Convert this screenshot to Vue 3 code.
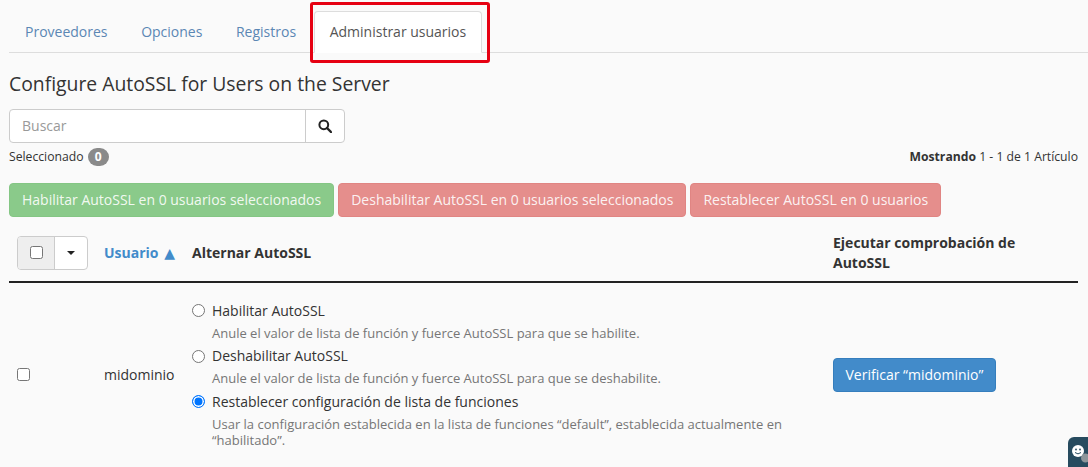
<script setup>
const tabs = ['Proveedores', 'Opciones', 'Registros']
const actions = [
  { label: 'Habilitar AutoSSL en 0 usuarios seleccionados', kind: 'success' },
  { label: 'Deshabilitar AutoSSL en 0 usuarios seleccionados', kind: 'danger' },
  { label: 'Restablecer AutoSSL en 0 usuarios', kind: 'danger' },
]
const options = [
  { label: 'Habilitar AutoSSL', help: 'Anule el valor de lista de función y fuerce AutoSSL para que se habilite.', checked: false },
  { label: 'Deshabilitar AutoSSL', help: 'Anule el valor de lista de función y fuerce AutoSSL para que se deshabilite.', checked: false },
  { label: 'Restablecer configuración de lista de funciones', help: 'Usar la configuración establecida en la lista de funciones “default”, establecida actualmente en “habilitado”.', checked: true },
]
</script>

<template>
  <div class="page">
    <nav class="tabs">
      <a v-for="t in tabs" :key="t" class="tab">{{ t }}</a>
      <a class="tab active">Administrar usuarios</a>
      <span class="redbox"></span>
    </nav>

    <h1 class="title">Configure AutoSSL for Users on the Server</h1>

    <div class="search">
      <div class="search-input">Buscar</div>
      <div class="search-btn">
        <svg width="14" height="14" viewBox="0 0 14 14" fill="none" stroke="#222" stroke-width="2">
          <circle cx="5.8" cy="5.8" r="4.4" />
          <path d="M9 9l4 4" stroke-linecap="round" stroke-width="2.4" />
        </svg>
      </div>
    </div>

    <div class="status">
      <div class="selected">Seleccionado <span class="badge">0</span></div>
      <div class="showing"><b>Mostrando</b> 1 - 1 de 1 Artículo</div>
    </div>

    <div class="actions">
      <button v-for="a in actions" :key="a.label" class="action" :class="a.kind">{{ a.label }}</button>
    </div>

    <div class="table-head">
      <div class="col-check">
        <div class="check-group">
          <span class="check-cell"><span class="box"></span></span>
          <span class="caret-cell"><span class="caret"></span></span>
        </div>
      </div>
      <div class="col-user sort">Usuario <span class="arrow">▲</span></div>
      <div class="col-toggle">Alternar AutoSSL</div>
      <div class="col-run run-head">Ejecutar comprobación de AutoSSL</div>
    </div>

    <div class="table-row">
      <div class="col-check row-check"><span class="box"></span></div>
      <div class="col-user">midominio</div>
      <div class="col-toggle options">
        <div v-for="o in options" :key="o.label" class="option">
          <div class="option-label">
            <span class="radio" :class="{ on: o.checked }"></span>{{ o.label }}
          </div>
          <div class="help">{{ o.help }}</div>
        </div>
      </div>
      <div class="col-run"><button class="verify">Verificar “midominio”</button></div>
    </div>

    <div class="chat">
      <svg width="20" height="26" viewBox="0 0 20 26">
        <circle cx="9" cy="10" r="6" fill="#fff" />
        <circle cx="7" cy="8.5" r="0.9" fill="#274b5f" />
        <circle cx="11" cy="8.5" r="0.9" fill="#274b5f" />
        <path d="M6 11.5q3 2.8 6 0" stroke="#274b5f" stroke-width="1" fill="none" />
        <circle cx="16.5" cy="17" r="4.5" fill="#8d969b" />
      </svg>
    </div>
  </div>
</template>

<style>
html, body { margin: 0; background: #fafafa; overflow: hidden; }
</style>

<style scoped>
.page {
  position: relative;
  width: 1088px;
  height: 467px;
  overflow: hidden;
  box-sizing: border-box;
  padding: 11px 10px 0 9px;
  background: #fafafa;
  color: #333;
  font-family: "Open Sans", sans-serif;
  font-size: 14px;
  line-height: 20px;
}
.tabs {
  position: relative;
  display: flex;
  height: 41px;
  margin-right: -10px;
  border-bottom: 1px solid #ddd;
}
.tab {
  box-sizing: border-box;
  height: 42px;
  padding: 10px 15px;
  margin-right: 1.6px;
  color: #5b87b4;
  border: 1px solid transparent;
  white-space: nowrap;
}
.tab.active {
  color: #555;
  background: #fff;
  border-color: #ddd #ddd #fff;
  border-radius: 4px 4px 0 0;
}
.redbox {
  position: absolute;
  left: 301px;
  top: -9px;
  width: 180px;
  height: 61px;
  box-sizing: border-box;
  border: 3px solid #e60012;
  border-radius: 3px;
}
.title {
  margin: 20px 0 0;
  font-size: 19.35px;
  line-height: 22px;
  font-weight: 400;
  color: #333;
}
.search {
  display: flex;
  width: 336px;
  height: 34px;
  margin-top: 14px;
  box-sizing: border-box;
  border: 1px solid #ccc;
  border-radius: 4px;
  background: #fff;
}
.search-input {
  flex: 1;
  padding: 6px 12px;
  color: #999;
  border-right: 1px solid #ccc;
}
.search-btn {
  width: 38px;
  display: flex;
  align-items: center;
  justify-content: center;
}
.status {
  display: flex;
  justify-content: space-between;
  align-items: center;
  height: 20px;
  margin-top: 4px;
  font-size: 12.2px;
}
.selected { display: flex; align-items: center; gap: 4px; }
.badge {
  width: 21px;
  height: 18px;
  border-radius: 10px;
  background: #8a8a8a;
  color: #fff;
  font-weight: 700;
  font-size: 12px;
  line-height: 18px;
  text-align: center;
}
.actions {
  display: flex;
  gap: 4px;
  margin-top: 16px;
}
.action {
  height: 34px;
  padding: 0 12px;
  border: 1px solid;
  border-radius: 4px;
  color: rgba(255, 255, 255, 0.9);
  font: 14px/20px "Open Sans", sans-serif;
  white-space: nowrap;
}
.success { background: #8aca8a; border-color: #84c684; }
.danger { background: #e58e8c; border-color: #e08583; }
.table-head, .table-row { display: flex; }
.table-head {
  box-sizing: border-box;
  height: 48px;
  margin-top: 18px;
  padding-bottom: 10px;
  align-items: center;
  font-weight: 700;
  border-bottom: 2px solid #222;
}
.col-check { width: 95px; padding-left: 8px; box-sizing: border-box; flex: none; }
.col-user { width: 88px; flex: none; }
.col-toggle { width: 641px; flex: none; }
.col-run { flex: 1; }
.run-head { padding-right: 50px; }
.sort { color: #428bca; }
.arrow { font-family: "DejaVu Sans", sans-serif; font-size: 14px; margin-left: 2px; }
.check-group {
  display: flex;
  width: 71px;
  height: 34px;
  box-sizing: border-box;
  border: 1px solid #ccc;
  border-radius: 4px;
  background: #fff;
  overflow: hidden;
}
.check-cell {
  width: 37px;
  padding-bottom: 2px;
  box-sizing: border-box;
  background: #eee;
  border-right: 1px solid #ccc;
  display: flex;
  align-items: center;
  justify-content: center;
}
.caret-cell { flex: 1; display: flex; align-items: center; justify-content: center; }
.caret {
  width: 0;
  height: 0;
  border-top: 4px solid #222;
  border-left: 4px solid transparent;
  border-right: 4px solid transparent;
}
.box {
  display: block;
  width: 13px;
  height: 13px;
  box-sizing: border-box;
  border: 1px solid #767676;
  border-radius: 2.5px;
  background: #fff;
}
.table-row { height: 184px; align-items: center; }
.row-check, .options { padding-bottom: 2px; }
.option-label {
  display: flex;
  align-items: center;
  height: 20px;
}
.radio {
  width: 13px;
  height: 13px;
  box-sizing: border-box;
  margin-right: 7px;
  border: 1px solid #767676;
  border-radius: 50%;
  background: #fff;
}
.radio.on {
  border: 1.5px solid #0075ff;
  box-shadow: inset 0 0 0 1.5px #fff;
  background: #0075ff;
}
.help {
  padding: 4px 0 5.5px 20px;
  width: 600px;
  box-sizing: border-box;
  font-size: 13px;
  line-height: 16px;
  color: #767676;
}
.option:last-child .help { padding-bottom: 0; }
.verify {
  height: 34px;
  padding: 0 11.5px;
  color: #fff;
  background: #428bca;
  border: 1px solid #357ebd;
  border-radius: 4px;
  font: 14px/20px "Open Sans", sans-serif;
}
.chat {
  position: absolute;
  right: 0;
  bottom: 0;
  width: 20px;
  height: 30px;
  padding: 4px 0 0 1px;
  box-sizing: border-box;
  background: #274b5f;
  border-radius: 6px 0 0 0;
  overflow: hidden;
}
</style>
